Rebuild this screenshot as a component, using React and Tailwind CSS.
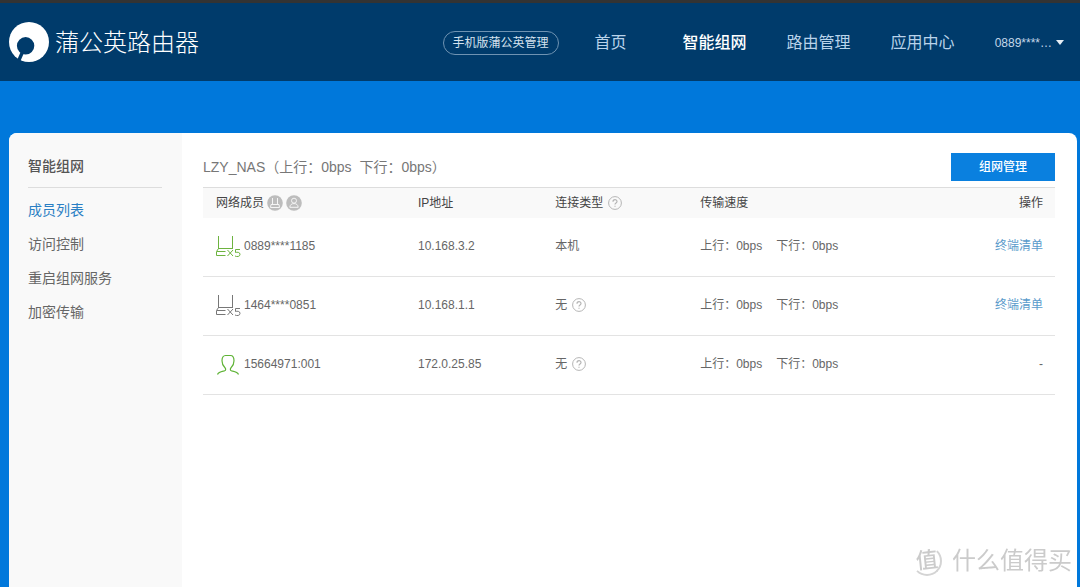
import React, { useState } from 'react';

const navItems = ['首页', '智能组网', '路由管理', '应用中心'];

const menuItems = ['成员列表', '访问控制', '重启组网服务', '加密传输'];

const members = [
  { id: 1, type: 'router', online: true, name: '0889****1185', ip: '10.168.3.2', link: '本机', help: false, devices: true },
  { id: 2, type: 'router', online: false, name: '1464****0851', ip: '10.168.1.1', link: '无', help: true, devices: true },
  { id: 3, type: 'user', online: true, name: '15664971:001', ip: '172.0.25.85', link: '无', help: true, devices: false },
];

const Logo = () => (
  <svg className="w-10 h-10 shrink-0" viewBox="0 0 40 40">
    <circle cx="20" cy="20" r="20" fill="#fff" />
    <circle cx="16.6" cy="23.8" r="8.7" fill="#003b6b" />
    <path d="M13.5 30L9.8 38.5" stroke="#003b6b" strokeWidth="3.4" />
  </svg>
);

const RouterIcon = ({ online }) => (
  <svg
    className={`w-[25px] h-[22px] shrink-0 ${online ? 'text-[#6db33f]' : 'text-[#777777]'}`}
    viewBox="0 0 25 22"
    fill="none"
    stroke="currentColor"
  >
    <path d="M2.5 1V13.5M16.5 1V13.5M2 13.5H17M2.5 13.5L0.5 16.5V20.5H9.5M1 16.5H9.5" />
    <path d="M11.5 15L17 21M17 15L11.5 21" />
    <path d="M24 14.5H19.5V17.5C21 17 24 17 24 19.3C24 21.8 21 22 19 21" />
  </svg>
);

const UserIcon = () => (
  <svg className="w-[25px] h-[22px] shrink-0 text-[#5fb336]" viewBox="0 0 25 22" fill="none" stroke="currentColor" strokeWidth="1.2">
    <path d="M1.5 21.5C2.5 18.8 5 18.6 8.5 17.8C10 17.3 10 15.8 8.8 14.5C7 12.8 6 10.8 6 7.8C6 4.3 7.5 2.5 9.5 2.5H14.5C16.5 2.5 18 4.3 18 7.8C18 10.8 17 12.8 15.2 14.5C14 15.8 14 17.3 15.5 17.8C19 18.6 21.5 18.8 22.5 21.5" />
  </svg>
);

const RouterBadge = () => (
  <svg className="w-4 h-4" viewBox="0 0 16 16" fill="none" stroke="#f5f5f5">
    <circle cx="8" cy="8" r="7.8" fill="#bdbdbd" stroke="none" />
    <path d="M5.5 3V9.5M10.5 3V9.5M4 9.5H12L12.5 12.5H3.5Z" />
  </svg>
);

const UserBadge = () => (
  <svg className="w-4 h-4" viewBox="0 0 16 16" fill="none" stroke="#f5f5f5">
    <circle cx="8" cy="8" r="7.8" fill="#bdbdbd" stroke="none" />
    <circle cx="8" cy="5.7" r="2.5" />
    <path d="M3.8 12.3C4 9.8 5.6 8.6 8 8.6C10.4 8.6 12 9.8 12.2 12.3Z" />
  </svg>
);

const HelpIcon = () => (
  <svg className="w-[14px] h-[14px]" viewBox="0 0 14 14" fill="none" stroke="#b5b5b5">
    <circle cx="7" cy="7" r="6.4" />
    <path d="M5 5.7C5 3 9 3 9 5.5C9 7 7 6.9 7 8.5M7 9.7V10.8" strokeWidth="1.2" />
  </svg>
);

const Watermark = () => (
  <div className="fixed right-2 bottom-2 flex items-center gap-[10px] text-[#cbcbcb] pointer-events-none">
    <div className="w-[30px] h-[30px] rounded-full border-2 border-transparent border-r-[#d4d4d4] border-b-[#d4d4d4] flex items-center justify-center">
      <span className="text-[22px] leading-none font-medium -rotate-6">值</span>
    </div>
    <span className="text-2xl leading-9">什么值得买</span>
  </div>
);

const App = () => {
  const [activeNav, setActiveNav] = useState('智能组网');
  const [activeMenu, setActiveMenu] = useState('成员列表');

  return (
    <div className="min-h-screen flex flex-col bg-[#0078db] text-xs text-[#666666] font-['Liberation_Sans','Noto_Sans_CJK_SC',sans-serif]">
      {/* Header */}
      <header className="h-[81px] shrink-0 flex items-center border-t-3 border-[#333333] bg-[#003b6b] pl-[9px] pr-4">
        <Logo />
        <h1 className="ml-[6px] pt-[2px] text-2xl font-light text-white whitespace-nowrap">蒲公英路由器</h1>

        <div className="ml-auto flex items-center pt-px whitespace-nowrap">
          <button className="w-[116px] h-6 rounded-full border border-[#6f93b2] text-xs text-[#d5e2ee]">手机版蒲公英管理</button>
          <nav className="ml-9 flex items-center gap-10 text-base">
            {navItems.map((item) => (
              <a
                key={item}
                href="#"
                onClick={() => setActiveNav(item)}
                className={`first:mr-4 ${activeNav === item ? 'text-white font-medium' : 'text-[#b9d3ea]'}`}
              >
                {item}
              </a>
            ))}
          </nav>
          <button className="ml-10 flex items-center gap-1 text-xs text-[#c3d7e8]">
            <span>0889****…</span>
            <svg className="w-2 h-[5px]" viewBox="0 0 8 5" fill="#e6eef5">
              <path d="M0 0H8L4 5Z" />
            </svg>
          </button>
        </div>
      </header>

      {/* Content card */}
      <main className="flex-1 flex mt-[52px] ml-[9px] mr-[3px] rounded-t-lg bg-white overflow-hidden">
        <aside className="w-[173px] shrink-0 bg-[#f9f9f9] pl-[19px] pr-5 pt-[22px] text-sm">
          <h2 className="pb-[10px] leading-[22px] font-medium text-[#555555] border-b border-[#dddddd]">智能组网</h2>
          <ul className="pt-[5px]">
            {menuItems.map((item) => (
              <li key={item}>
                <a
                  href="#"
                  onClick={() => setActiveMenu(item)}
                  className={`block leading-[34px] ${activeMenu === item ? 'text-[#2a7fc4]' : 'text-[#666666]'}`}
                >
                  {item}
                </a>
              </li>
            ))}
          </ul>
        </aside>

        <section className="flex-1 pl-[21px] pr-[22px] pt-5">
          <div className="flex items-center justify-between pb-[6px]">
            <p className="text-sm text-[#777777] whitespace-pre">LZY_NAS（上行：0bps  下行：0bps）</p>
            <button className="w-[104px] h-7 bg-[#0a80df] text-xs font-medium text-white">组网管理</button>
          </div>

          <table className="w-full table-fixed border-collapse text-left">
            <thead>
              <tr className="h-[30px] bg-[#f9f9f9] border-t border-[#dddddd] text-[#444444]">
                <th className="w-[25%] pl-[13px] font-normal">
                  <div className="flex items-center gap-[3px]">
                    网络成员
                    <RouterBadge />
                    <UserBadge />
                  </div>
                </th>
                <th className="w-[16%] pl-[2px] font-normal">IP地址</th>
                <th className="w-[17%] pl-[3px] font-normal">
                  <div className="flex items-center gap-[5px]">
                    连接类型
                    <HelpIcon />
                  </div>
                </th>
                <th className="pl-[3px] font-normal">传输速度</th>
                <th className="w-[15%] pr-3 font-normal text-right">操作</th>
              </tr>
            </thead>
            <tbody>
              {members.map((m) => (
                <tr key={m.id} className="h-[59px] border-b border-[#e3e3e3]">
                  <td className="pl-[13px] pb-[2px]">
                    <div className="flex items-center gap-[3px]">
                      {m.type === 'router' ? <RouterIcon online={m.online} /> : <UserIcon />}
                      {m.name}
                    </div>
                  </td>
                  <td className="pl-[2px] pb-[2px]">{m.ip}</td>
                  <td className="pl-[3px] pb-[2px]">
                    <div className="flex items-center gap-[5px]">
                      {m.link}
                      {m.help && <HelpIcon />}
                    </div>
                  </td>
                  <td className="pl-[3px] pb-[2px]">
                    <div className="flex gap-[14px]">
                      <span>上行：0bps</span>
                      <span>下行：0bps</span>
                    </div>
                  </td>
                  <td className="pr-3 pb-[2px] text-right">
                    {m.devices ? <a href="#" className="text-[#5a9bcb]">终端清单</a> : '-'}
                  </td>
                </tr>
              ))}
            </tbody>
          </table>
        </section>
      </main>

      <Watermark />
    </div>
  );
};

export default App;
